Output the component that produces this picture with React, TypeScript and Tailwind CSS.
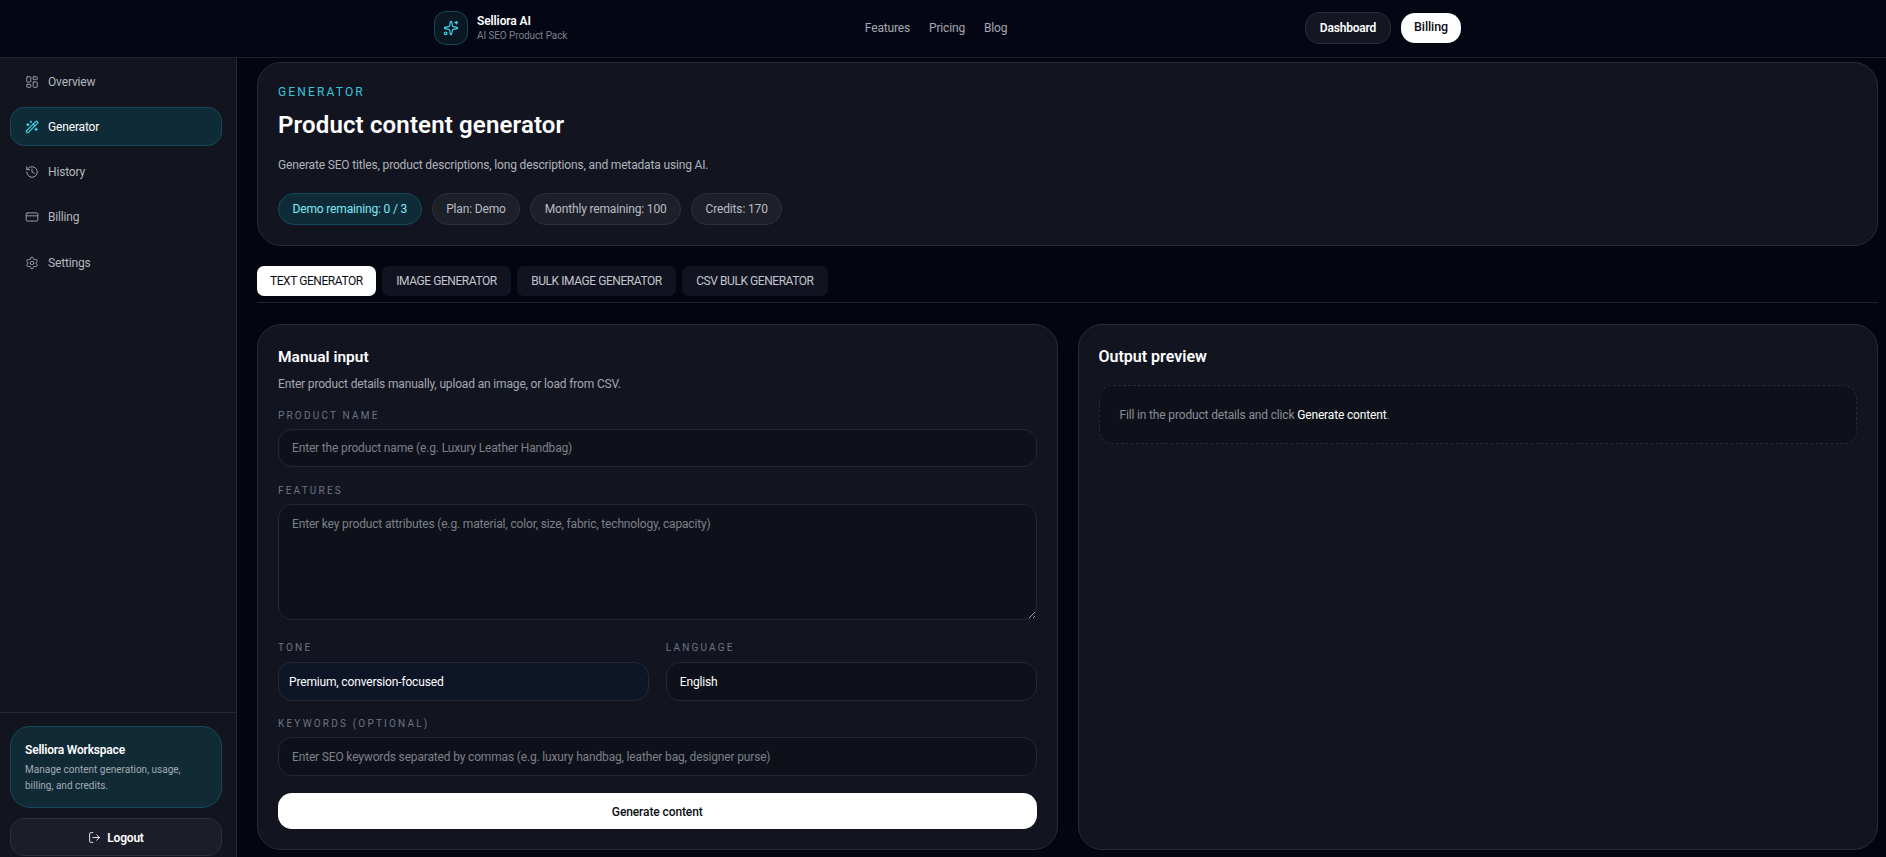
import {
  CreditCard,
  History,
  LayoutDashboard,
  LogOut,
  Settings,
  Sparkles,
  WandSparkles,
} from "lucide-react";

const navItems = [
  { label: "Overview", icon: LayoutDashboard },
  { label: "Generator", icon: WandSparkles, active: true },
  { label: "History", icon: History },
  { label: "Billing", icon: CreditCard },
  { label: "Settings", icon: Settings },
];

const tabs = ["Text generator", "Image generator", "Bulk image generator", "CSV bulk generator"];

const pills = ["Plan: Demo", "Monthly remaining: 100", "Credits: 170"];

const bodyText = "text-[12px] tracking-[-0.16px]";
const labelClass = "block text-[10px] leading-[14px] tracking-[0.22em] uppercase text-[#6f7380]";
const fieldClass = `block w-full rounded-[14px] border border-[#242835] bg-[#0e1119] px-[13px] ${bodyText} text-white outline-none placeholder:text-[#7d808a]`;

const Sidebar = () => (
  <aside className="flex w-[237px] shrink-0 flex-col justify-between border-r border-[#252936] bg-[#12141e]">
    <nav className="flex flex-col gap-[6.25px] pl-[10px] pr-[14px] pt-[4px]">
      {navItems.map(({ label, icon: Icon, active }) => (
        <a
          key={label}
          className={
            active
              ? `flex h-[39px] items-center gap-[9px] rounded-[14px] border border-[#14495a] bg-[#0f2b38] pl-[14px] ${bodyText} text-white`
              : `flex h-[39px] items-center gap-[9px] rounded-[14px] border border-transparent pl-[14px] ${bodyText} text-[#b4b7bf]`
          }
        >
          <Icon size={14} strokeWidth={active ? 1.9 : 1.6} className={active ? "text-[#44d9ef]" : "text-[#a3a6ae]"} />
          {label}
        </a>
      ))}
    </nav>
    <div className="border-t border-[#252936] pl-[10px] pr-[14px] pt-[13px] pb-[1px]">
      <div className="h-[82px] rounded-[20px] border border-[#14495a] bg-[#102a36] px-[14px] pt-[13px]">
        <p className="text-[12px] leading-[20px] font-semibold tracking-[-0.19px] text-white">Selliora Workspace</p>
        <p className="mt-[2px] text-[10px] leading-[16px] text-[#a4abb3]">
          Manage content generation, usage,
          <br />
          billing, and credits.
        </p>
      </div>
      <button className="mt-[10px] flex h-[38px] w-full items-center justify-center gap-[6px] rounded-[14px] border border-[#2d303b] bg-[#1b1e29] pt-[1px] text-[12px] font-semibold tracking-[-0.2px] text-white">
        <LogOut size={13} strokeWidth={1.6} />
        Logout
      </button>
    </div>
  </aside>
);

const Field = ({ label, className, children }: { label: string; className: string; children: React.ReactNode }) => (
  <div className={className}>
    <label className={labelClass}>{label}</label>
    {children}
  </div>
);

export default function App() {
  return (
    <div className="flex h-screen flex-col overflow-hidden bg-[#03050f] font-['Roboto','Noto_Sans',sans-serif]">
      <header className="h-[58px] shrink-0 border-b border-[#1d2130] bg-[#040713]">
        <div className="ml-[434px] flex h-full w-[1027px] items-center justify-between pb-[2px]">
          <div className="flex items-center gap-[9px]">
            <div className="flex h-[34px] w-[34px] items-center justify-center rounded-[12px] border border-[#134a59] bg-[#0a1824] text-[#44d9ef]">
              <Sparkles size={16} strokeWidth={1.7} />
            </div>
            <div>
              <p className="text-[12px] leading-[16px] font-semibold tracking-[-0.1px] text-white">Selliora AI</p>
              <p className="text-[10px] leading-[14px] tracking-[-0.1px] text-[#7d808a]">AI SEO Product Pack</p>
            </div>
          </div>
          <nav className={`flex items-center gap-[19px] pt-[1px] ${bodyText} text-[#a4a7b0]`}>
            <a>Features</a>
            <a>Pricing</a>
            <a>Blog</a>
          </nav>
          <div className="flex items-center gap-[10px]">
            <button className="h-[32px] w-[86px] rounded-[14px] border border-[#282c38] bg-[#141722] text-[12px] font-semibold tracking-[-0.2px] text-white">
              Dashboard
            </button>
            <button className="h-[30px] w-[60px] rounded-[14px] bg-white text-[12.5px] font-medium tracking-[-0.1px] text-[#0b0d14]">
              Billing
            </button>
          </div>
        </div>
      </header>

      <div className="flex min-h-0 flex-1">
        <Sidebar />
        <main className="min-w-0 flex-1 overflow-hidden pl-[20px] pr-[8px] pt-[4px]">
          <section className="h-[184px] rounded-[24px] border border-[#282c38] bg-[#12151f] px-[20px] pt-[21px]">
            <p className="text-[12px] leading-[16px] tracking-[0.18em] text-[#35c5dc] uppercase">Generator</p>
            <h1 className="mt-[9px] text-[24px] leading-[32px] font-semibold tracking-[0.15px] text-white">
              Product content generator
            </h1>
            <p className={`mt-[14px] ${bodyText} leading-[20px] text-[#b0b3bb]`}>
              Generate SEO titles, product descriptions, long descriptions, and metadata using AI.
            </p>
            <div className="mt-[18px] flex gap-[10px]">
              <span className={`flex h-[32px] items-center rounded-full border border-[#14495a] bg-[#0f2b38] px-[13.5px] ${bodyText} text-[#7fe8f5]`}>
                Demo remaining: 0 / 3
              </span>
              {pills.map((pill) => (
                <span
                  key={pill}
                  className={`flex h-[32px] items-center rounded-full border border-[#2d303b] bg-[#1d2029] px-[13.5px] ${bodyText} text-[#b9bcc3]`}
                >
                  {pill}
                </span>
              ))}
            </div>
          </section>

          <div className="mt-[20px] flex gap-[6.5px] border-b border-[#1f2330] pb-[6px]">
            {tabs.map((tab, i) => (
              <button
                key={tab}
                className={
                  i === 0
                    ? "h-[30px] rounded-[7px] bg-white px-[13px] text-[12px] tracking-[-0.44px] text-[#0b0d14] uppercase"
                    : "h-[30px] rounded-[7px] bg-[#111420] px-[14px] text-[12px] tracking-[-0.44px] text-[#c3c5cc] uppercase"
                }
              >
                {tab}
              </button>
            ))}
          </div>

          <div className="mt-[21px] grid h-[526px] grid-cols-2 gap-[20px]">
            <section className="rounded-[24px] border border-[#282c38] bg-[#12151f] px-[20px] pt-[20px]">
              <h2 className="text-[15.5px] leading-[24px] font-semibold text-white">Manual input</h2>
              <p className={`mt-[5px] ${bodyText} leading-[20px] text-[#a4a7b0]`}>
                Enter product details manually, upload an image, or load from CSV.
              </p>
              <Field label="Product name" className="mt-[15px]">
                <input className={`mt-[6px] h-[38px] ${fieldClass}`} placeholder="Enter the product name (e.g. Luxury Leather Handbag)" />
              </Field>
              <Field label="Features" className="mt-[17px]">
                <textarea
                  className={`mt-[6px] h-[116px] py-[10px] ${fieldClass}`}
                  placeholder="Enter key product attributes (e.g. material, color, size, fabric, technology, capacity)"
                />
              </Field>
              <div className="mt-[21px] grid grid-cols-2 gap-[17px]">
                <Field label="Tone" className="">
                  <select className={`mt-[7px] block h-[39px] w-full appearance-none rounded-[14px] border border-[#242835] bg-[#0d1526] px-[10px] ${bodyText} text-white outline-none`}>
                    <option>Premium, conversion-focused</option>
                  </select>
                </Field>
                <Field label="Language" className="">
                  <select className={`mt-[7px] block h-[39px] w-full appearance-none rounded-[14px] border border-[#242835] bg-[#0e1119] px-[13px] ${bodyText} text-white outline-none`}>
                    <option>English</option>
                  </select>
                </Field>
              </div>
              <Field label="Keywords (optional)" className="mt-[16px]">
                <input
                  className={`mt-[6px] h-[39px] ${fieldClass}`}
                  placeholder="Enter SEO keywords separated by commas (e.g. luxury handbag, leather bag, designer purse)"
                />
              </Field>
              <button className="mt-[17px] h-[36px] w-full rounded-[14px] bg-white pt-[1px] text-[12px] font-medium tracking-[-0.1px] text-[#0b0d14]">
                Generate content
              </button>
            </section>

            <section className="rounded-[24px] border border-[#282c38] bg-[#12151f] px-[20px] pt-[20px]">
              <h2 className="text-[16px] leading-[24px] font-semibold text-white">Output preview</h2>
              <div className={`mt-[16px] flex h-[59px] items-center rounded-[14px] border border-dashed border-[#262a36] bg-[#0e1119] pl-[20px] ${bodyText} text-[#8a8d96]`}>
                <p>
                  Fill in the product details and click <span className="text-white">Generate content</span>.
                </p>
              </div>
            </section>
          </div>
        </main>
      </div>
    </div>
  );
}
